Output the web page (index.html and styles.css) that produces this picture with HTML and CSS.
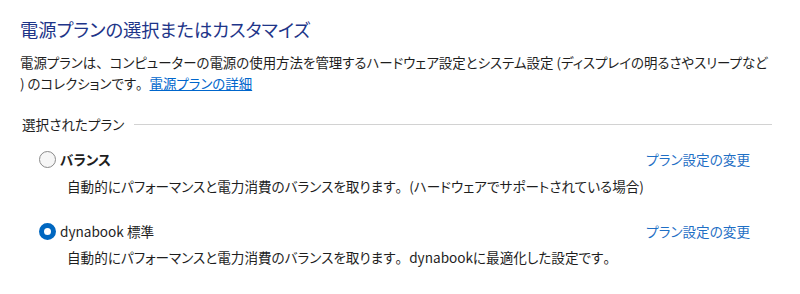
FILE: index.html
```html
<!DOCTYPE html>
<html lang="ja">
<head>
<meta charset="utf-8">
<link rel="stylesheet" href="styles.css">
</head>
<body>
<div class="page">
  <h1 class="title">電源プランの選択またはカスタマイズ</h1>
  <p class="intro"><span class="line">電源プランは<span class="fw">、</span>コンピューターの電源の使用方法を管理するハードウェア設定とシステム設定 (ディスプレイの明るさやスリープなど</span><span class="line">) のコレクションです<span class="fw">。</span><a class="link" href="#">電源プランの詳細</a></span></p>
  <div class="group-header"><span class="group-label">選択されたプラン</span><span class="rule"></span></div>
  <div class="plan plan-first">
    <div class="plan-row">
      <span class="radio"></span>
      <span class="plan-name bold">バランス</span>
      <a class="change" href="#">プラン設定の変更</a>
    </div>
    <div class="plan-desc">自動的にパフォーマンスと電力消費のバランスを取ります<span class="fw">。</span>(ハードウェアでサポートされている場合)</div>
  </div>
  <div class="plan plan-second">
    <div class="plan-row">
      <span class="radio checked"></span>
      <span class="plan-name">dynabook 標準</span>
      <a class="change" href="#">プラン設定の変更</a>
    </div>
    <div class="plan-desc">自動的にパフォーマンスと電力消費のバランスを取ります<span class="fw">。</span>dynabookに最適化した設定です<span class="fw">。</span></div>
  </div>
</div>
</body>
</html>
```
FILE: styles.css
```css
html, body {
  margin: 0;
  padding: 0;
  background: #ffffff;
}
body {
  font-family: "Noto Sans CJK JP", "Noto Sans", sans-serif;
  font-feature-settings: "palt";
  color: #1e1e1e;
  width: 800px;
  height: 294px;
  overflow: hidden;
}
.fw {
  font-feature-settings: normal;
}
.page {
  padding: 15px 28px 0 20px;
}
.title {
  margin: 0;
  font-size: 18.3px;
  line-height: 28px;
  font-weight: 400;
  color: #1e3589;
}
.intro {
  margin: 9px 0 0 0;
  font-size: 13.45px;
  line-height: 21px;
}
.line {
  display: block;
  white-space: nowrap;
}
.link {
  color: #0066cc;
  text-decoration: underline;
}
.group-header {
  display: flex;
  align-items: center;
  margin-top: 20px;
  height: 20px;
  font-size: 13.6px;
  padding-left: 2px;
}
.group-label {
  white-space: nowrap;
}
.rule {
  flex: 1;
  height: 1px;
  background: #d2d2d2;
  margin-left: 10px;
}
.plan {
  margin-left: 19px;
  margin-right: 22px;
}
.plan-first {
  margin-top: 14px;
}
.plan-second {
  margin-top: 24px;
}
.plan-row {
  display: flex;
  align-items: center;
  height: 22px;
  font-size: 13.6px;
}
.radio {
  box-sizing: border-box;
  width: 17px;
  height: 17px;
  border-radius: 50%;
  border: 1px solid #8a8a8a;
  background: #f6f6f6;
  flex: none;
}
.radio.checked {
  border: 5px solid #0067c0;
  background: #ffffff;
}
.plan-name {
  margin-left: 4px;
  flex: 1;
}
.bold {
  font-weight: 700;
}
.change {
  color: #1f6fc5;
  text-decoration: none;
}
.plan-desc {
  margin-top: 6px;
  margin-left: 28px;
  font-size: 13.6px;
  line-height: 20px;
  white-space: nowrap;
}
.plan-second .plan-desc {
  margin-top: 5px;
}
```
